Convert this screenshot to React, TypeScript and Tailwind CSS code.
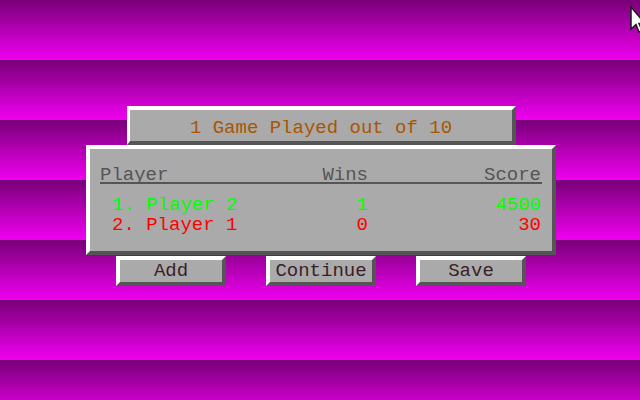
const players = [
  { rank: 1, name: "Player 2", wins: 1, score: 4500, color: "text-[#00ff00]" },
  { rank: 2, name: "Player 1", wins: 0, score: 30, color: "text-[#ff0000]" },
];

const buttons = ["Add", "Continue", "Save"];

function Cursor() {
  return (
    <svg className="absolute left-[630px] top-[6px]" width="16" height="28" viewBox="0 0 16 28">
      <path d="M1 1 L1 23 L6 18.5 L9 26 L12 24.5 L9 17.5 L15 17.5 Z" fill="#fff" stroke="#1a1a1a" strokeWidth="1.5" />
    </svg>
  );
}

export default function App() {
  return (
    <div className="relative h-[400px] w-[640px] overflow-hidden bg-[repeating-linear-gradient(180deg,#780078_0px,#f000f0_60px)] font-['Liberation_Mono',monospace] text-[19px]">
      <Cursor />

      <div className="flex flex-col pt-[106px]">
        <div className="ml-[127px] h-[39px] w-[389px] border-t-4 border-l-[3px] border-b-4 border-r-4 border-t-white border-l-white border-b-[#555555] border-r-[#555555] bg-[#aaaaaa] pt-[9px] text-center leading-none text-[#aa5500]">
          1 Game Played out of 10
        </div>

        <div className="ml-[86px] h-[110px] w-[470px] border-4 border-t-white border-l-white border-b-[#555555] border-r-[#555555] bg-[#aaaaaa] px-[10px] pt-[17px]">
          <div className="grid h-[18px] grid-cols-[1fr_80px_174px] border-b-2 border-[#555555] leading-none text-[#555555]">
            <span>Player</span>
            <span className="text-right">Wins</span>
            <span className="pr-[1px] text-right">Score</span>
          </div>
          <div className="mt-[11px]">
            {players.map((p) => (
              <div key={p.rank} className={`grid grid-cols-[1fr_80px_174px] leading-[20px] ${p.color}`}>
                <span className="pl-[12px]">
                  {p.rank}. {p.name}
                </span>
                <span className="text-right">{p.wins}</span>
                <span className="pr-[1px] text-right">{p.score}</span>
              </div>
            ))}
          </div>
        </div>

        <div className="ml-[116px] mt-[1px] flex gap-[40px]">
          {buttons.map((b) => (
            <div
              key={b}
              className="flex h-[30px] w-[110px] items-center justify-center border-4 border-t-white border-l-white border-b-[#555555] border-r-[#555555] bg-[#aaaaaa] leading-none text-[#3a1f28]"
            >
              {b}
            </div>
          ))}
        </div>
      </div>
    </div>
  );
}
